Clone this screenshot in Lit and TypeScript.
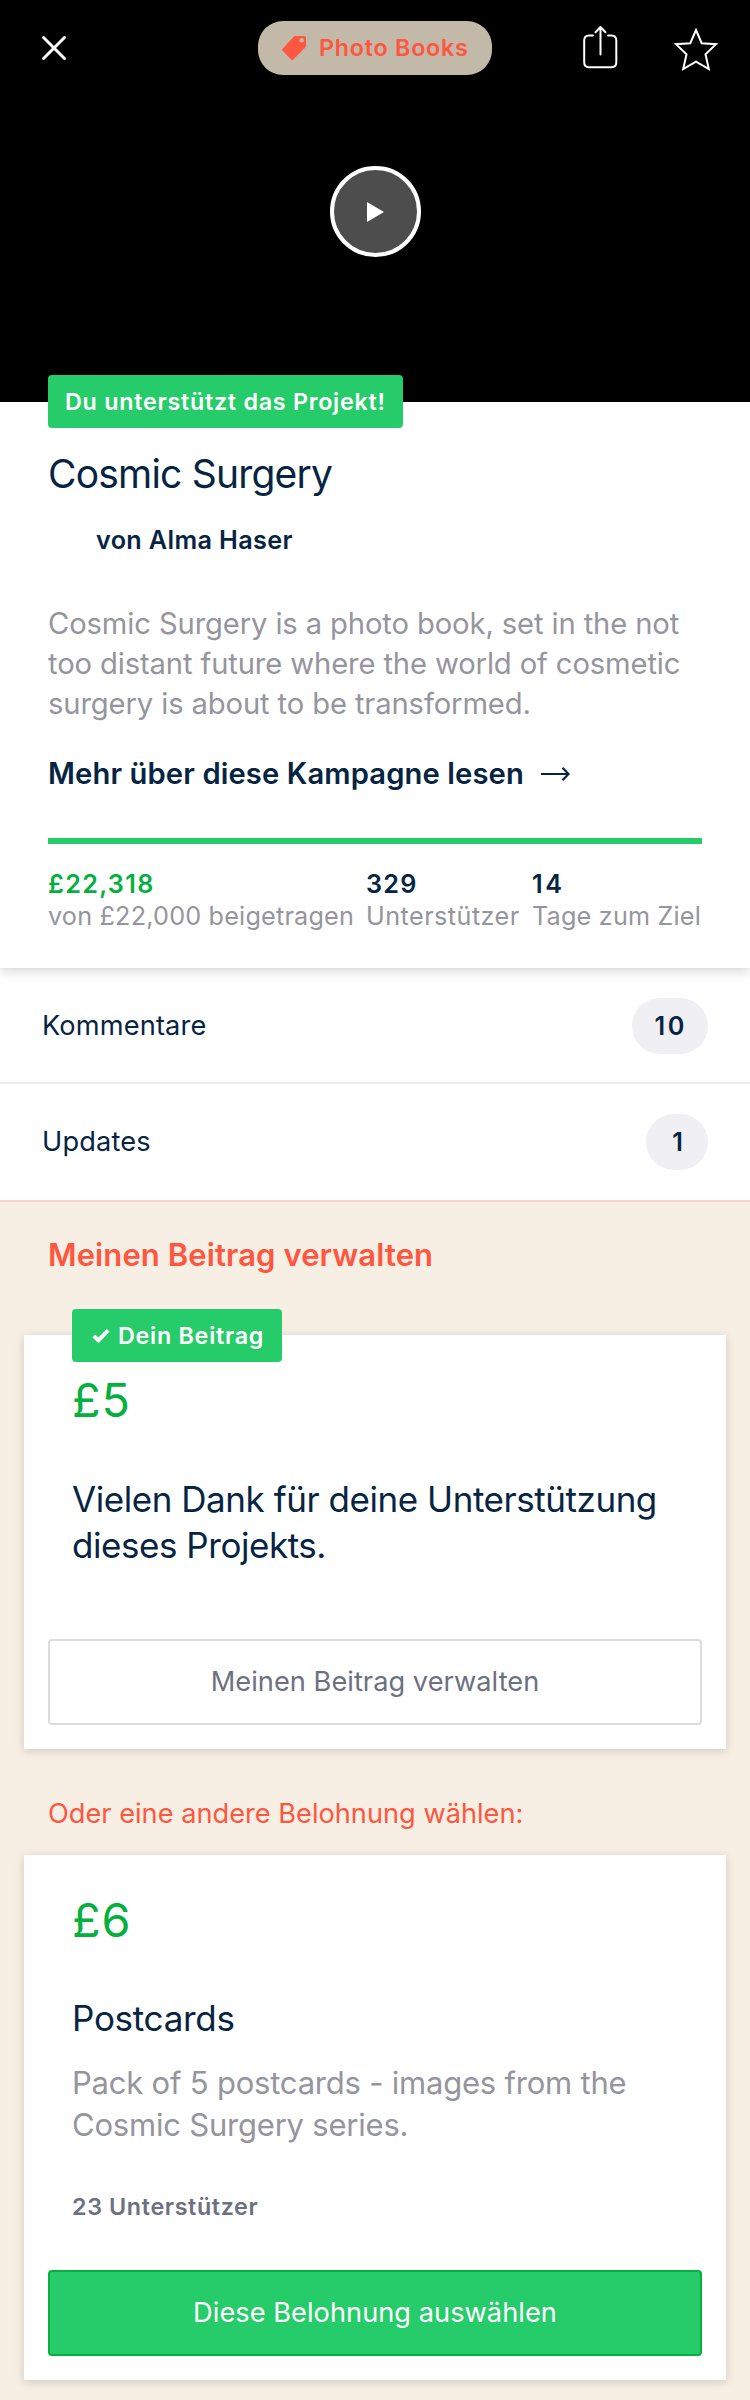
import { LitElement, html, css, svg } from "lit";
import { customElement, property } from "lit/decorators.js";

const checkIcon = svg`<path d="M1.4 9.2 4.2 6.4 7.3 9.6 15.8 0.9 18.6 3.6 7.5 15.2Z" fill="#fff"/>`;

@customElement("count-row")
class CountRow extends LitElement {
  @property() label = "";
  @property() count = "";

  static styles = css`
    :host {
      display: flex;
      align-items: center;
      justify-content: space-between;
      box-sizing: border-box;
      height: 116px;
      padding: 0 42px;
      color: #072542;
    }
    .label {
      font-size: 27.2px;
      letter-spacing: 0.15px;
      line-height: 36px;
    }
    .count {
      box-sizing: border-box;
      height: 56px;
      padding: 0 21px 0 23px;
      border-radius: 28px;
      background: #efeff4;
      font-size: 25.2px;
      font-weight: 600;
      letter-spacing: 2.6px;
      line-height: 56px;
    }
    :host([single]) .count {
      padding: 0 23px 0 24px;
      letter-spacing: 0;
      min-width: 62px;
      text-align: center;
    }
  `;

  render() {
    return html`<span class="label">${this.label}</span><span class="count">${this.count}</span>`;
  }
}

@customElement("app-root")
class AppRoot extends LitElement {
  static styles = css`
    :host {
      display: block;
      width: 750px;
      height: 2400px;
      overflow: hidden;
      background: #f7efe4;
      color: #072542;
      font-family: Inter, sans-serif;
      -webkit-font-smoothing: antialiased;
    }
    * {
      box-sizing: border-box;
    }
    p,
    h1,
    h2,
    h3 {
      margin: 0;
      font-weight: 400;
      white-space: nowrap;
    }
    svg {
      display: block;
    }

    .hero {
      height: 402px;
      background: #000;
    }
    .bar {
      display: grid;
      grid-template-columns: 258px 234px 1fr;
      align-items: center;
      height: 96px;
    }
    .close {
      padding-left: 40px;
    }
    .category {
      display: flex;
      align-items: center;
      gap: 13px;
      height: 54px;
      padding-left: 24px;
      border-radius: 25px;
      background: #c2b9a9;
      color: #ff5640;
      font-size: 23.3px;
      font-weight: 600;
      letter-spacing: 0.75px;
      line-height: 54px;
      white-space: nowrap;
    }
    .actions {
      display: flex;
      justify-content: flex-end;
      gap: 52px;
      padding-right: 30px;
    }
    .play {
      display: grid;
      place-items: center;
      width: 91px;
      height: 91px;
      margin: 70px auto 0;
      border: 4px solid #fff;
      border-radius: 50%;
      background: #4d4d4d;
    }

    .badge {
      position: absolute;
      display: flex;
      align-items: center;
      height: 53px;
      border-radius: 4px;
      background: #26cc69;
      color: #fff;
      font-size: 23.3px;
      font-weight: 600;
      letter-spacing: 0.74px;
      line-height: 53px;
      white-space: nowrap;
    }
    .supporting {
      top: -27px;
      left: 48px;
      width: 355px;
      padding-left: 17px;
    }
    .pledged {
      top: -26px;
      left: 48px;
      width: 210px;
      gap: 7px;
      padding-left: 19px;
    }

    .summary {
      position: relative;
      height: 566px;
      padding: 48px 48px 0;
      background: #fff;
      box-shadow: 0 2px 12px rgba(0, 0, 0, 0.2);
      z-index: 1;
    }
    .title {
      font-size: 39px;
      letter-spacing: -0.8px;
      line-height: 48px;
    }
    .author {
      margin-top: 26px;
      padding-left: 48px;
      font-size: 25.2px;
      font-weight: 600;
      letter-spacing: 0.36px;
      line-height: 32px;
    }
    .blurb {
      margin-top: 48px;
      color: #95959e;
      font-size: 29.2px;
      letter-spacing: -0.12px;
      line-height: 40px;
    }
    .more {
      display: flex;
      align-items: center;
      gap: 16px;
      margin-top: 30px;
      font-size: 29.2px;
      font-weight: 600;
      letter-spacing: 0.11px;
      line-height: 40px;
      white-space: nowrap;
    }
    .progress {
      height: 6px;
      margin-top: 44px;
      background: #26cc69;
    }
    .stats {
      display: grid;
      grid-template-columns: 318px 166px 1fr;
      margin-top: 24px;
      font-size: 25.2px;
      line-height: 32px;
    }
    .stats p {
      color: #95959e;
      letter-spacing: 0.2px;
    }
    .stats .backers {
      letter-spacing: 0.46px;
    }
    .stats .value {
      color: #072542;
      font-weight: 600;
      letter-spacing: 1.3px;
    }
    .stats .days {
      letter-spacing: 2.6px;
    }
    .stats .raised {
      color: #05b03f;
    }

    .rows {
      background: #fff;
    }
    .comments {
      border-bottom: 2px solid #ececec;
      padding-top: 2px;
    }

    .rewards {
      padding: 33px 24px 0;
      border-top: 2px solid #f7d6c9;
    }
    .heading {
      padding-left: 24px;
      color: #ff5640;
      font-size: 31px;
      font-weight: 600;
      letter-spacing: 0.1px;
      line-height: 40px;
    }
    .card {
      position: relative;
      padding: 37px 24px 24px;
      background: #fff;
      box-shadow: 0 2px 9px rgba(0, 0, 0, 0.16);
    }
    .first {
      height: 414px;
      margin-top: 60px;
    }
    .second {
      height: 525px;
      margin-top: 23px;
    }
    .body {
      padding-left: 24px;
    }
    .price {
      color: #05b03f;
      font-size: 46.8px;
      letter-spacing: 1px;
      line-height: 56px;
    }
    .thanks {
      margin-top: 48px;
      font-size: 35px;
      letter-spacing: -0.45px;
      line-height: 46px;
    }
    .name {
      margin-top: 47px;
      font-size: 35px;
      letter-spacing: -0.28px;
      line-height: 46px;
    }
    .detail {
      margin-top: 21px;
      color: #95959e;
      font-size: 31px;
      letter-spacing: -0.21px;
      line-height: 42px;
    }
    .count {
      margin-top: 46px;
      color: #6b7180;
      font-size: 23.3px;
      font-weight: 600;
      letter-spacing: 0.63px;
      line-height: 30px;
    }
    .button {
      display: flex;
      align-items: center;
      justify-content: center;
      width: 100%;
      height: 86px;
      padding: 0;
      border: 2px solid #dcdcde;
      border-radius: 4px;
      background: #fff;
      color: #6b7180;
      font: 400 27.2px/36px Inter, sans-serif;
      letter-spacing: 0.04px;
    }
    .manage {
      margin-top: 71px;
    }
    .select {
      margin-top: 48px;
      border-color: #05b03f;
      background: #26cc69;
      color: #fff;
    }
    .other {
      margin-top: 47px;
      padding-left: 24px;
      color: #ff5640;
      font-size: 27.2px;
      line-height: 36px;
    }
  `;

  render() {
    return html`
      <header class="hero">
        <div class="bar">
          <div class="close">
            <svg width="28" height="28" viewBox="0 0 28 28">
              <path d="M3.5 3.5 24.5 24.5M24.5 3.5 3.5 24.5" stroke="#fff" stroke-width="3" stroke-linecap="round" />
            </svg>
          </div>
          <div class="category">
            <svg width="24" height="24" viewBox="0 0 24 24">
              <path
                fill="#ff5640"
                fill-rule="evenodd"
                d="M12.6 0H22.4Q24 0 24 1.6V9.6Q24 10.6 23.2 11.4L11.2 23.4Q10.2 24.4 9.2 23.4L0.6 14.8Q-0.4 13.8 0.6 12.8L12 0.6Q12.3 0 12.6 0ZM19.7 2A2.3 2.3 0 1 0 19.7 6.6 2.3 2.3 0 1 0 19.7 2Z"
              />
            </svg>
            Photo Books
          </div>
          <div class="actions">
            <svg width="40" height="48" viewBox="0 0 40 48">
              <g fill="none" stroke="#fff" stroke-width="2" stroke-linecap="round" stroke-linejoin="round" transform="translate(0 1)">
                <path d="M13 10.5H9Q4.200 10.500 4.200 15.500V37.500Q4.200 42.200 9 42.200H31.500Q36.300 42.200 36.300 37.500V15.500Q36.300 10.500 31.500 10.500H28" />
                <path d="M20.500 29.500V2.500M15.500 7.200 20.500 2 25.500 7.200" />
              </g>
            </svg>
            <svg width="48" height="48" viewBox="0 0 48 48">
              <path
                fill="none"
                stroke="#fff"
                stroke-width="2"
                d="M24 6 29.700 19.200 44 20.200 33.500 30.300 36.800 45 24 37.700 11.200 45 14.500 30.300 4 20.200 18.300 19.200Z"
              />
            </svg>
          </div>
        </div>
        <div class="play">
          <svg width="18" height="20" viewBox="0 0 18 20">
            <path d="M1 0 18 10 1 20Z" fill="#fff" />
          </svg>
        </div>
      </header>

      <section class="summary">
        <div class="badge supporting">Du unterstützt das Projekt!</div>
        <h1 class="title">Cosmic Surgery</h1>
        <p class="author">von Alma Haser</p>
        <p class="blurb">
          Cosmic Surgery is a photo book, set in the not<br />too distant future where the world of cosmetic<br />surgery is about to be transformed.
        </p>
        <div class="more">
          Mehr über diese Kampagne lesen
          <svg width="30" height="16" viewBox="0 0 30 16">
            <path d="M1 8H28M22.500 1.800 28.500 8 22.500 14.200" fill="none" stroke="#072542" stroke-width="2.200" />
          </svg>
        </div>
        <div class="progress"></div>
        <div class="stats">
          <div>
            <p class="value raised">£22,318</p>
            <p>von £22,000 beigetragen</p>
          </div>
          <div>
            <p class="value">329</p>
            <p class="backers">Unterstützer</p>
          </div>
          <div>
            <p class="value days">14</p>
            <p>Tage zum Ziel</p>
          </div>
        </div>
      </section>

      <section class="rows">
        <count-row class="comments" label="Kommentare" count="10"></count-row>
        <count-row single label="Updates" count="1"></count-row>
      </section>

      <section class="rewards">
        <h2 class="heading">Meinen Beitrag verwalten</h2>
        <article class="card first">
          <div class="badge pledged">
            <svg width="20" height="16" viewBox="0 0 20 16">${checkIcon}</svg>
            Dein Beitrag
          </div>
          <div class="body">
            <p class="price">£5</p>
            <p class="thanks">Vielen Dank für deine Unterstützung<br />dieses Projekts.</p>
          </div>
          <button class="button manage">Meinen Beitrag verwalten</button>
        </article>
        <p class="other">Oder eine andere Belohnung wählen:</p>
        <article class="card second">
          <div class="body">
            <p class="price">£6</p>
            <h3 class="name">Postcards</h3>
            <p class="detail">Pack of 5 postcards - images from the<br />Cosmic Surgery series.</p>
            <p class="count">23 Unterstützer</p>
          </div>
          <button class="button select">Diese Belohnung auswählen</button>
        </article>
      </section>
    `;
  }
}
